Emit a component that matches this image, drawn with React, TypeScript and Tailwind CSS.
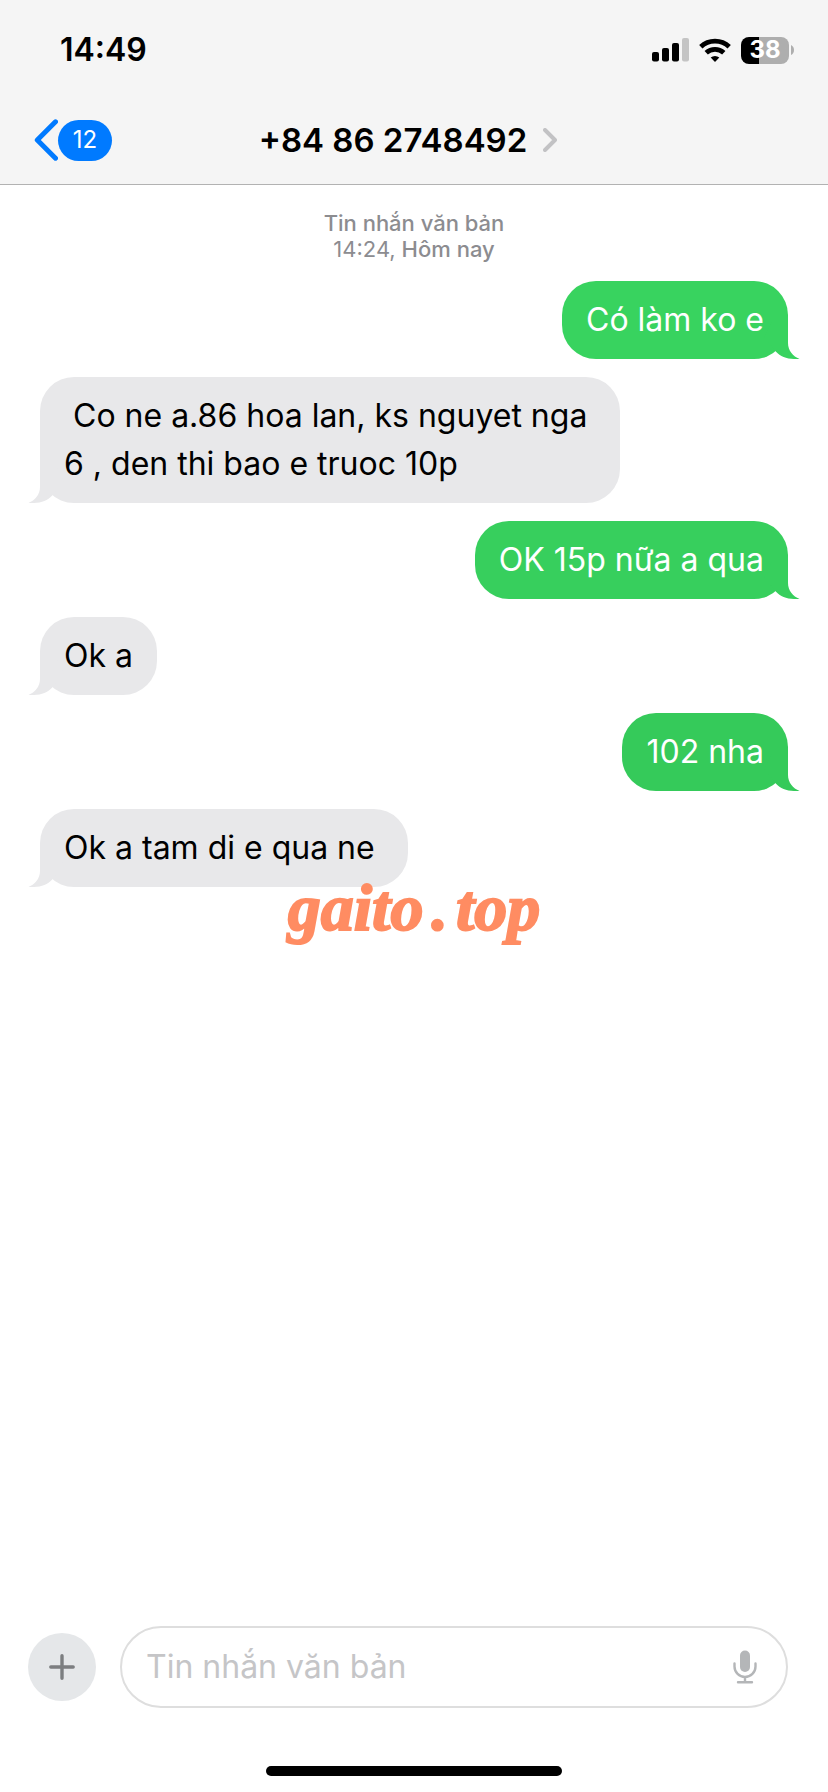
import type { ReactNode } from 'react';

type Message = { from: 'me' | 'them'; text: string; tone: string };

const messages: Message[] = [
  { from: 'me', text: 'Có làm ko e', tone: 'bg-[#38d35f] text-[#38d35f]' },
  { from: 'them', text: ' Co ne a.86 hoa lan, ks nguyet nga 6 , den thi bao e truoc 10p', tone: 'bg-[#e8e8ea] text-[#e8e8ea]' },
  { from: 'me', text: 'OK 15p nữa a qua', tone: 'bg-[#37cf5d] text-[#37cf5d]' },
  { from: 'them', text: 'Ok a', tone: 'bg-[#e8e8ea] text-[#e8e8ea]' },
  { from: 'me', text: '102 nha', tone: 'bg-[#35ca5a] text-[#35ca5a]' },
  { from: 'them', text: 'Ok a tam di e qua ne ', tone: 'bg-[#e8e8ea] text-[#e8e8ea]' },
];

function StatusIcons() {
  return (
    <div className="flex items-center" aria-label="Signal, Wi-Fi, battery 38%">
      <svg className="h-6 w-[37px]" viewBox="0 0 37 24">
        <rect x="0" y="14" width="7" height="9.5" rx="2" />
        <rect x="10" y="10" width="7" height="13.5" rx="2" />
        <rect x="20" y="5" width="7" height="18.5" rx="2" />
        <rect x="30" y="0" width="7" height="23.5" rx="2" fill="#c4c4c4" />
      </svg>
      <svg className="ml-2.5 h-6 w-8" viewBox="0 0 32 24" fill="none" stroke="#000" strokeWidth="4.8">
        <path d="M1.8 8.8A20.5 20.5 0 0 1 30.2 8.8" />
        <path d="M7.2 14.8A12.8 12.8 0 0 1 24.8 14.8" />
        <path d="M16 24 11.7 19.6A6.6 6.6 0 0 1 20.3 19.6Z" fill="#000" stroke="none" />
      </svg>
      <div className="ml-2.5 flex h-[27px] w-12 items-center justify-center rounded-lg bg-linear-to-r from-black from-[37%] to-[#aeaeae] to-[37%] text-2xl font-bold text-white">
        38
      </div>
      <svg className="ml-0.5 h-2.5 w-[3px]" viewBox="0 0 3 10" fill="#aeaeae">
        <path d="M0 0Q3 1.5 3 5T0 10Z" />
      </svg>
    </div>
  );
}

function Bubble({ message }: { message: Message }) {
  const mine = message.from === 'me';
  return (
    <li className={mine ? 'flex justify-end' : 'flex justify-start'}>
      <div className={`relative max-w-[580px] rounded-[34px] px-6 py-[15px] ${message.tone}`}>
        <svg
          className={mine ? 'absolute -right-3 bottom-0 h-10 w-10' : 'absolute -left-3 bottom-0 h-10 w-10 -scale-x-100'}
          viewBox="0 0 40 40"
          fill="currentColor"
          aria-hidden="true"
        >
          <path d="M28 3V24C28 31.5 33 37.5 39.5 39.8C29.5 40.8 21 38.4 16 32.7L4 18L12 3Z" />
        </svg>
        <p className={`relative text-[32px] leading-[48px] whitespace-pre-wrap ${mine ? 'text-white' : 'text-black'}`}>
          {message.text}
        </p>
      </div>
    </li>
  );
}

function Header({ children }: { children: ReactNode }) {
  return <header className="border-b border-[#b2b2b2] bg-[#f5f5f5]">{children}</header>;
}

export default function App() {
  return (
    <div className="relative flex min-h-screen flex-col bg-white font-['Inter',sans-serif] text-black">
      <Header>
        <div className="flex h-[100px] items-center justify-between pr-[34px] pl-[60px]">
          <time className="text-[32px] leading-10 font-semibold">14:49</time>
          <StatusIcons />
        </div>
        <div className="grid h-[84px] grid-cols-[1fr_auto_1fr] items-start px-[34px] pt-4">
          <button type="button" aria-label="Back, 12 unread" className="flex h-12 items-center justify-self-start">
            <svg className="h-[42px] w-6" viewBox="0 0 24 42" fill="none" stroke="#007aff" strokeWidth="5" strokeLinecap="round" strokeLinejoin="round">
              <path d="M21.5 2.8 3.3 21 21.5 39.2" />
            </svg>
            <span className="flex h-[41px] w-[54px] items-center justify-center rounded-full bg-[#007aff] text-2xl text-white">12</span>
          </button>
          <button type="button" className="flex h-12 items-center gap-4 pr-3">
            <h1 className="text-[33px] leading-[48px] font-semibold">+84 86 2748492</h1>
            <svg className="h-6 w-[14px]" viewBox="0 0 14 24" fill="none" stroke="#c2c2c4" strokeWidth="4" strokeLinecap="round" strokeLinejoin="round">
              <path d="M2 2 12 12 2 22" />
            </svg>
          </button>
        </div>
      </Header>

      <main className="flex-1 px-10 pt-[25px]">
        <p className="text-center text-[22px] leading-[26px] font-medium text-[#8c8c90]">
          Tin nhắn văn bản
          <br />
          <span className="font-normal">14:24,</span> Hôm nay
        </p>
        <ul className="mt-[19px] flex flex-col gap-[18px]">
          {messages.map((message) => (
            <Bubble key={message.text} message={message} />
          ))}
        </ul>
      </main>

      <div className="pointer-events-none absolute inset-x-0 top-[872px] flex justify-center gap-2 font-['Liberation_Serif',serif] text-[66px] leading-[72px] font-bold text-[#ff8c62] italic [-webkit-text-stroke:2px_#ff8c62]">
        <span>gaito</span>
        <span>.</span>
        <span>top</span>
      </div>

      <footer className="pb-4">
        <form className="flex items-center gap-6 pr-10 pl-7" onSubmit={(event) => event.preventDefault()}>
          <button type="button" aria-label="Add attachment" className="flex size-[68px] items-center justify-center rounded-full bg-[#e5e7e9]">
            <svg className="size-[26px]" viewBox="0 0 26 26" stroke="#7c7e80" strokeWidth="3.4" strokeLinecap="round">
              <path d="M13 1.8V24.2M1.8 13H24.2" />
            </svg>
          </button>
          <div className="flex h-[82px] flex-1 items-center rounded-full border-2 border-[#dedede] pr-[29px] pl-6">
            <input
              type="text"
              aria-label="Tin nhắn văn bản"
              placeholder="Tin nhắn văn bản"
              className="min-w-0 flex-1 bg-transparent text-[32px] leading-[48px] outline-none placeholder:text-[#c5c5c7]"
            />
            <button type="button" aria-label="Dictate">
              <svg className="h-[34px] w-6" viewBox="0 0 24 34" fill="none" stroke="#b4b6b8" strokeWidth="2.4" strokeLinecap="round">
                <rect x="7" y="0.5" width="10" height="21.5" rx="5" fill="#b4b6b8" stroke="none" />
                <path d="M1.5 13.5V16.5A10.5 10.5 0 0 0 22.5 16.5V13.5M12 27V32M5 32.2H19" />
              </svg>
            </button>
          </div>
        </form>
        <div className="mx-auto mt-[58px] h-2.5 w-[296px] rounded-full bg-black" />
      </footer>
    </div>
  );
}
